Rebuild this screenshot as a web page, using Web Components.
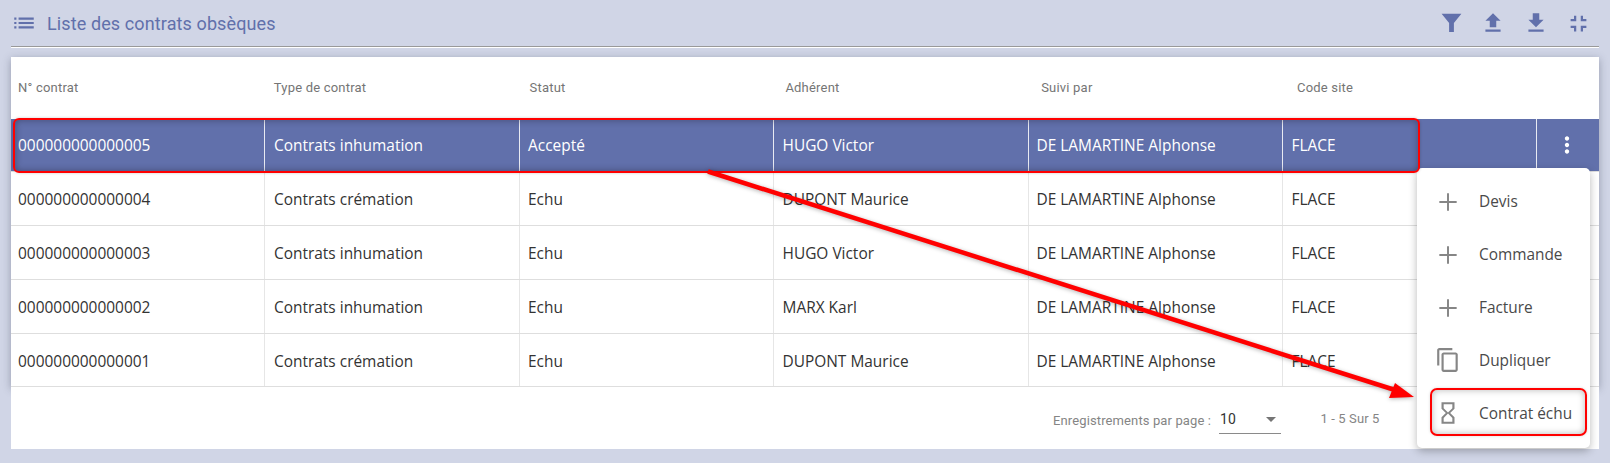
<!DOCTYPE html>
<html lang="fr"><head><meta charset="utf-8"><title>Contrats obsèques</title>
<style>html,body{margin:0;padding:0;background:#d0d5e6}body{width:1610px;height:463px;overflow:hidden}</style>
</head><body>
<app-page>
  <page-header title-text="Liste des contrats obsèques"></page-header>
  <contract-table></contract-table>
  <row-menu></row-menu>
  <annotation-layer></annotation-layer>
</app-page>
<script>
const ICONS={
 list:'M3 13h2v-2H3v2zm0 4h2v-2H3v2zm0-8h2V7H3v2zm4 4h14v-2H7v2zm0 4h14v-2H7v2zM7 7v2h14V7H7z',
 filter:'M2.5 3.5h19l-7.2 9v8.7h-4.6v-8.7z',
 upload:'M9 16h6v-6h4l-7-7-7 7h4zm-4 2h14v2H5z',
 download:'M19 9h-4V3H9v6H5l7 7 7-7zM5 18v2h14v-2H5z',
 compress:'M5 16h3v3h2v-5H5v2zm3-8H5v2h5V5H8v3zm6 11h2v-3h3v-2h-5v5zm2-11V5h-2v5h5V8h-3z',
 more:'M12 8c1.1 0 2-.9 2-2s-.9-2-2-2-2 .9-2 2 .9 2 2 2zm0 2c-1.1 0-2 .9-2 2s.9 2 2 2 2-.9 2-2-.9-2-2-2zm0 6c-1.1 0-2 .9-2 2s.9 2 2 2 2-.9 2-2-.9-2-2-2z',
 add:'M20 12.9h-7.1V20h-1.8v-7.1H4v-1.8h7.1V4h1.8v7.1H20z',
 copy:'M16 1H4c-1.1 0-2 .9-2 2v14h2V3h12V1zm3 4H8c-1.1 0-2 .9-2 2v14c0 1.1.9 2 2 2h11c1.1 0 2-.9 2-2V7c0-1.1-.9-2-2-2zm0 16H8V7h11v14z',
 hourglass:'M6 2v6h.01L6 8.01 10 12l-4 4 .01.01H6V22h12v-5.99h-.01L18 16l-4-4 4-3.99-.01-.01H18V2H6zm10 14.5V20H8v-3.5l4-4 4 4zm-4-5l-4-4V4h8v3.5l-4 4z'
};
class UiIcon extends HTMLElement{
  connectedCallback(){
    const s=this.getAttribute('size')||26;
    this.attachShadow({mode:'open'}).innerHTML=`<style>:host{display:block;width:${s}px;height:${s}px;flex:none;color:inherit}svg{display:block;width:100%;height:100%;fill:currentColor}</style><svg viewBox="0 0 24 24"><path d="${ICONS[this.getAttribute('name')]}"/></svg>`;
  }
}
customElements.define('ui-icon',UiIcon);

class AppPage extends HTMLElement{
  constructor(){super();this.attachShadow({mode:'open'}).innerHTML=`<style>:host{display:block;position:relative;width:1610px;height:463px;box-sizing:border-box;padding:0 11px 0 11px;background:#d0d5e6}</style><slot></slot>`;}
}
customElements.define('app-page',AppPage);

class PageHeader extends HTMLElement{
  connectedCallback(){
    this.attachShadow({mode:'open'}).innerHTML=`<style>
    :host{display:flex;align-items:center;box-sizing:border-box;height:48px;padding:0 8px 1px 0;margin-bottom:9px;color:#6170ab;border-bottom:1px solid #fff;box-shadow:inset 0 -1px 0 #999;font:18px Roboto,sans-serif}
    h1{font:inherit;margin:0 0 0 10px;letter-spacing:.11px;flex:1}
    .start{width:26px}
    .tools{display:flex;gap:16.5px;margin-right:-1px}
    </style><ui-icon class="start" name="list" size="26"></ui-icon><h1>${this.getAttribute('title-text')}</h1>
    <div class="tools"><ui-icon name="filter" size="25"></ui-icon><ui-icon name="upload" size="26"></ui-icon><ui-icon name="download" size="26"></ui-icon><ui-icon name="compress" size="27"></ui-icon></div>`;
  }
}
customElements.define('page-header',PageHeader);

const COLS='253.5px 255.5px 253.5px 255px 254px 254.5px 1fr';
class TableHead extends HTMLElement{
  connectedCallback(){
    const labels=['N° contrat','Type de contrat','Statut','Adhérent','Suivi par','Code site'];
    this.attachShadow({mode:'open'}).innerHTML=`<style>
    :host{display:grid;grid-template-columns:repeat(6,255.8px) 1fr;height:61.5px;align-items:center;padding-left:7px;background:#fff;font:13px Roboto,sans-serif;color:#757575;letter-spacing:.2px}
    </style>`+labels.map(l=>`<div>${l}</div>`).join('');
  }
}
customElements.define('table-head',TableHead);

class TableRow extends HTMLElement{
  connectedCallback(){
    const cells=JSON.parse(this.getAttribute('cells'));
    const sel=this.hasAttribute('selected');
    const pads=[7,9.5,8,9,8,9];
    this.attachShadow({mode:'open'}).innerHTML=`<style>
    :host{display:grid;grid-template-columns:${COLS};height:53.8px;box-sizing:border-box;border-bottom:1px solid #dedede;background:${sel?'#6170ab':'#fff'};color:${sel?'#fff':'#333'};font:15.45px "Open Sans",sans-serif}
    .c{display:flex;align-items:center;padding-top:1px;border-right:1px solid ${sel?'#e8eaf2':'#e6e6e6'};box-sizing:border-box;white-space:nowrap}
    .end{border-right:0;justify-content:center;padding:0 2px 0 0}
    </style>`+cells.map((t,i)=>`<div class="c" style="padding-left:${pads[i]}px">${t}</div>`).join('')+`<div class="c end">${sel?'<ui-icon name="more" size="26"></ui-icon>':''}</div>`;
  }
}
customElements.define('table-row',TableRow);

class PagerBar extends HTMLElement{
  constructor(){super();this.attachShadow({mode:'open'}).innerHTML=`<style>
    :host{display:flex;align-items:center;height:62px;box-sizing:border-box;background:#fff;padding:0 0 0 1042px;font:13px Roboto,sans-serif;color:#858585;letter-spacing:.12px}
    .lbl{width:166px;white-space:nowrap;padding-top:4px}
    .sel{width:62px;height:29px;margin-top:3px;box-sizing:border-box;border-bottom:1px solid #8a8a8a;display:flex;align-items:center;justify-content:space-between;padding:0 5px 0 1px;color:#333;font-size:14px}
    .sel i{width:0;height:0;border:5px solid transparent;border-top-color:#757575;border-bottom:0;margin-right:0}
    .rng{margin-left:39.5px;white-space:nowrap}
    </style><div class="lbl">Enregistrements par page :</div><div class="sel"><span>10</span><i></i></div><div class="rng">1 - 5 Sur 5</div>`;}
}
customElements.define('pager-bar',PagerBar);

class ContractTable extends HTMLElement{
  constructor(){super();
    const rows=[
     ['000000000000005','Contrats inhumation','Accepté','HUGO Victor'],
     ['000000000000004','Contrats crémation','Echu','DUPONT Maurice'],
     ['000000000000003','Contrats inhumation','Echu','HUGO Victor'],
     ['000000000000002','Contrats inhumation','Echu','MARX Karl'],
     ['000000000000001','Contrats crémation','Echu','DUPONT Maurice']];
    this.attachShadow({mode:'open'}).innerHTML=`<style>
    :host{display:block;width:1588px}
    .body{background:#fff;box-shadow:0 2px 8px rgba(40,45,70,.35)}
    </style><div class="body"><table-head></table-head>${rows.map((r,i)=>`<table-row ${i==0?'selected':''} cells='${JSON.stringify([...r,'DE LAMARTINE Alphonse','FLACE'])}'></table-row>`).join('')}</div><pager-bar></pager-bar>`;
  }
}
customElements.define('contract-table',ContractTable);

class MenuItem extends HTMLElement{
  connectedCallback(){
    this.attachShadow({mode:'open'}).innerHTML=`<style>
    :host{display:flex;align-items:center;height:52.8px;padding-left:18px;font:15.4px "Open Sans",sans-serif;color:#4a4a4a;white-space:nowrap}
    ui-icon{color:#868686;margin-right:18px}
    </style><ui-icon name="${this.getAttribute('icon')}" size="26"></ui-icon><slot></slot>`;
  }
}
customElements.define('menu-item',MenuItem);

class RowMenu extends HTMLElement{
  constructor(){super();this.attachShadow({mode:'open'}).innerHTML=`<style>
    :host{display:block;position:absolute;left:1417px;top:168px;width:173px;box-sizing:border-box;padding:7.6px 0 8.4px;background:#fff;border-radius:5px;box-shadow:0 3px 8px rgba(0,0,0,.28)}
    </style><menu-item icon="add">Devis</menu-item><menu-item icon="add">Commande</menu-item><menu-item icon="add">Facture</menu-item><menu-item icon="copy">Dupliquer</menu-item><menu-item icon="hourglass">Contrat échu</menu-item>`;}
}
customElements.define('row-menu',RowMenu);

class AnnotationLayer extends HTMLElement{
  constructor(){super();this.attachShadow({mode:'open'}).innerHTML=`<style>
    :host{position:absolute;inset:0;display:block;pointer-events:none}
    .b{position:absolute;box-sizing:border-box;border:2px solid #f00;border-radius:6px}
    .r{left:13px;top:118px;width:1407px;height:55px;box-shadow:inset 0 0 7px rgba(30,30,50,.45),0 0 3px rgba(0,0,0,.2)}
    .m{left:1430px;top:388px;width:157px;height:48px;border-radius:7px;box-shadow:inset 0 0 7px rgba(0,0,0,.28),0 0 3px rgba(0,0,0,.15)}
    svg{position:absolute;left:0;top:0;filter:drop-shadow(0 1px 2px rgba(0,0,0,.3))}
    </style><div class="b r"></div><div class="b m"></div>
    <svg width="1610" height="463" viewBox="0 0 1610 463"><path d="M708 171.5L1395 390" stroke="#f00" stroke-width="4.5" fill="none"/><path d="M1414 397L1395 383L1389 398z" fill="#f00"/></svg>`;}
}
customElements.define('annotation-layer',AnnotationLayer);
</script>
</body></html>
